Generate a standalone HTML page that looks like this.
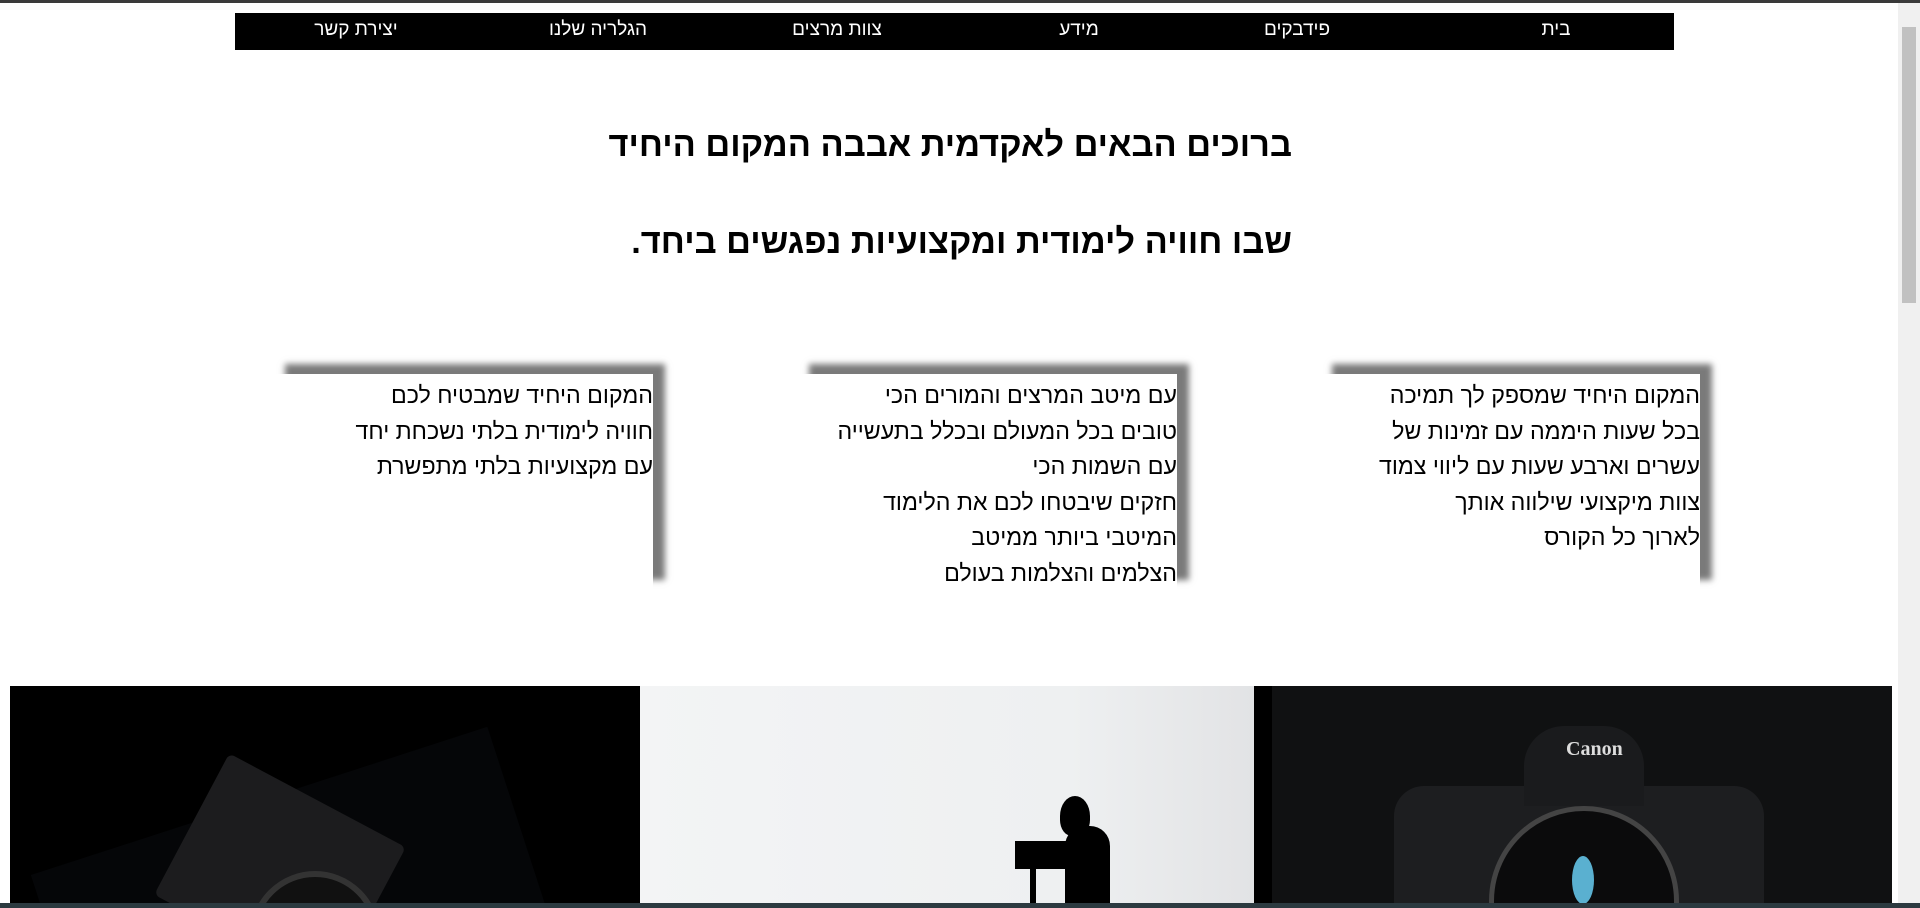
<!DOCTYPE html>
<html lang="he" dir="rtl"><head><meta charset="utf-8">
<style>
*{margin:0;padding:0;box-sizing:border-box}
html,body{width:1920px;height:908px;overflow:hidden;background:#fff;font-family:"Liberation Sans","DejaVu Sans",sans-serif;color:#000;position:relative}
.topline{position:absolute;left:0;top:0;width:1920px;height:3px;background:#3a3a3a}
nav{position:absolute;left:235px;top:13px;width:1439px;height:37px;background:#000}
nav span{position:absolute;top:6px;color:#fff;font-size:19px;white-space:nowrap;transform:translateX(50%)}
h1{position:absolute;right:628px;width:700px;text-align:right;font-size:34.4px;font-weight:bold;white-space:nowrap}
.box{position:absolute;top:374px;width:380px;height:216px;background:#fff;box-shadow:12px -10px 6px #7a7a7a;font-size:23.2px;line-height:35.6px;text-align:right;white-space:nowrap;padding-top:4px}
.img{position:absolute;top:686px;height:217px;overflow:hidden}
.sb{position:absolute;right:0;top:3px;width:22px;height:900px;background:#f0f0f0}
.thumb{position:absolute;right:4px;top:24px;width:14px;height:276px;background:#c1c1c1}
.hb{position:absolute;left:0;top:903px;width:1920px;height:5px;background:#2c3a40}
</style></head><body>
<div class="topline"></div>
<nav>
<span style="right:118px">בית</span>
<span style="right:377px">פידבקים</span>
<span style="right:595px">מידע</span>
<span style="right:837px">צוות מרצים</span>
<span style="right:1076px">הגלריה שלנו</span>
<span style="right:1318px">יצירת קשר</span>
</nav>
<h1 style="top:126px">ברוכים הבאים לאקדמית אבבה המקום היחיד</h1>
<h1 style="top:223px">שבו חוויה לימודית ומקצועיות נפגשים ביחד.</h1>

<div class="box" style="left:1320px">המקום היחיד שמספק לך תמיכה<br>בכל שעות היממה עם זמינות של<br>עשרים וארבע שעות עם ליווי צמוד<br>צוות מיקצועי שילווה אותך<br>לארוך כל הקורס</div>
<div class="box" style="left:797px">עם מיטב המרצים והמורים הכי<br>טובים בכל המעולם ובכלל בתעשייה<br>עם השמות הכי<br>חזקים שיבטחו לכם את הלימוד<br>המיטבי ביותר ממיטב<br>הצלמים והצלמות בעולם</div>
<div class="box" style="left:273px">המקום היחיד שמבטיח לכם<br>חוויה לימודית בלתי נשכחת יחד<br>עם מקצועיות בלתי מתפשרת</div>

<div class="img" style="left:10px;width:630px;background:#000">
 <div style="position:absolute;left:40px;top:110px;width:480px;height:200px;background:#050608;transform:rotate(-18deg)"></div>
 <div style="position:absolute;left:170px;top:105px;width:200px;height:160px;background:#1c1c1e;transform:rotate(28deg);border-radius:6px"></div>
 <div style="position:absolute;left:240px;top:185px;width:130px;height:130px;border-radius:50%;background:#111;border:6px solid #333"></div>
 <div style="position:absolute;left:280px;top:225px;width:50px;height:50px;border-radius:50%;background:#3a2a6a"></div>
</div>
<div class="img" style="left:640px;width:614px;background:linear-gradient(90deg,#f3f4f5,#eef0f1 70%,#e2e3e5)">
 <div style="position:absolute;left:420px;top:110px;width:30px;height:40px;border-radius:50% 50% 40% 40%;background:#000"></div>
 <div style="position:absolute;left:425px;top:140px;width:45px;height:90px;background:#000;border-radius:20px 20px 0 0"></div>
 <div style="position:absolute;left:375px;top:155px;width:55px;height:28px;background:#000"></div>
 <div style="position:absolute;left:390px;top:180px;width:6px;height:50px;background:#000"></div>
</div>
<div class="img" style="left:1254px;width:638px;background:#101112">
 <div style="position:absolute;left:0;top:0;width:18px;height:218px;background:#000"></div>
 <div style="position:absolute;left:140px;top:100px;width:370px;height:160px;background:#1d1e20;border-radius:30px 30px 0 0"></div>
 <div style="position:absolute;left:270px;top:40px;width:120px;height:80px;background:#1a1b1d;border-radius:40px 40px 0 0"></div>
 <div style="position:absolute;left:312px;top:52px;color:#ddd;font-size:20px;font-family:'Liberation Serif',serif;font-weight:bold">Canon</div>
 <div style="position:absolute;left:235px;top:120px;width:190px;height:190px;border-radius:50%;background:#0b0b0c;border:5px solid #444"></div>
 <div style="position:absolute;left:318px;top:170px;width:22px;height:48px;border-radius:50%;background:#5ab0d0"></div>
</div>

<div class="sb"><div class="thumb"></div></div>
<div class="hb"></div>
</body></html>
